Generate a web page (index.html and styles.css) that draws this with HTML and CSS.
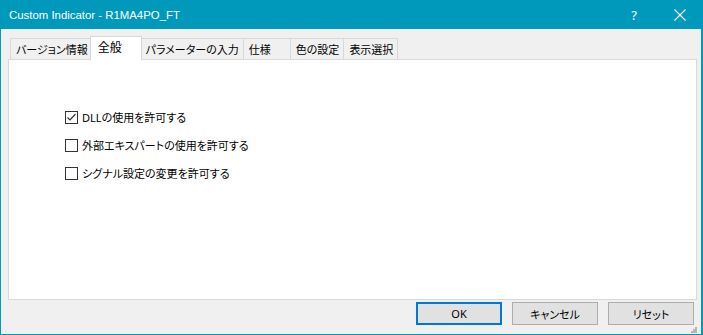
FILE: index.html
```html
<!DOCTYPE html>
<html lang="ja">
<head>
<meta charset="utf-8">
<link rel="stylesheet" href="styles.css">
</head>
<body>
<div class="window">
  <div class="titlebar">
    <span class="title">Custom Indicator - R1MA4PO_FT</span>
    <span class="tb-help">?</span>
    <span class="tb-close">
      <svg width="12" height="12" viewBox="0 0 12 12"><path d="M0.5 0.5 L11.5 11.5 M11.5 0.5 L0.5 11.5" stroke="#fff" stroke-width="1.1" fill="none"/></svg>
    </span>
  </div>
  <div class="body">
    <div class="tabs">
      <div class="tab">バージョン情報</div>
      <div class="tab active">全般</div>
      <div class="tab">パラメーターの入力</div>
      <div class="tab">仕様</div>
      <div class="tab">色の設定</div>
      <div class="tab">表示選択</div>
    </div>
    <div class="panel">
      <label class="check">
        <span class="box checked">
          <svg width="11" height="11" viewBox="0 0 11 11"><path d="M1.5 5.5 L4 8 L9.5 2" stroke="#333" stroke-width="1.2" fill="none"/></svg>
        </span>
        <span>DLLの使用を許可する</span>
      </label>
      <label class="check">
        <span class="box"></span>
        <span>外部エキスパートの使用を許可する</span>
      </label>
      <label class="check">
        <span class="box"></span>
        <span>シグナル設定の変更を許可する</span>
      </label>
    </div>
    <div class="footer">
      <button class="btn default">OK</button>
      <button class="btn">キャンセル</button>
      <button class="btn">リセット</button>
      <span class="grip">
        <svg width="6" height="6" viewBox="0 0 6 6" fill="#b5b5b5">
          <rect x="4" y="0" width="2" height="2"/>
          <rect x="2" y="2" width="2" height="2"/><rect x="4" y="2" width="2" height="2"/>
          <rect x="0" y="4" width="2" height="2"/><rect x="2" y="4" width="2" height="2"/><rect x="4" y="4" width="2" height="2"/>
        </svg>
      </span>
    </div>
  </div>
</div>
</body>
</html>
```

FILE: styles.css
```css
* { box-sizing: border-box; }
html, body { margin: 0; padding: 0; }
body {
  font-family: "Noto Sans", "Noto Sans CJK JP", sans-serif;
  font-size: 11px;
  font-feature-settings: "palt";
  color: #000;
  background: #f0f0f0;
}
.window {
  width: 703px;
  height: 335px;
  display: flex;
  flex-direction: column;
  background: #f0f0f0;
}
.titlebar {
  height: 29px;
  background: #0099bc;
  color: #fff;
  display: flex;
  align-items: center;
  padding-left: 9px;
  flex: none;
}
.title { flex: 1; font-family: "Liberation Sans", sans-serif; font-size: 11.4px; }
.tb-help { width: 46px; text-align: center; font-size: 13px; }
.tb-close { width: 46px; display: flex; justify-content: center; align-items: center; }
.body {
  flex: 1;
  display: flex;
  flex-direction: column;
  border: 1px solid #0099bc;
  border-top: 0;
  border-right-width: 2px;
  padding: 7px 4px 0 7px;
}
.tabs {
  display: flex;
  align-items: flex-end;
  height: 23px;
  padding-left: 2px;
}
.tab {
  height: 21px;
  line-height: 21px;
  min-width: 48px;
  padding: 0 4px 0 5px;
  border: 1px solid #d9d9d9;
  border-bottom: 0;
  margin-right: -1px;
  background: #f0f0f0;
  white-space: nowrap;
}
.tab.active {
  position: relative;
  z-index: 1;
  height: 24px;
  line-height: 21px;
  min-width: 52px;
  margin: 0 -2px -1px -2px;
  padding: 0 7px;
  background: #fff;
  font-size: 12px;
}
.panel {
  height: 241px;
  background: #fff;
  border: 1px solid #d9d9d9;
  padding: 49px 0 0 56px;
  display: flex;
  flex-direction: column;
  gap: 12px;
}
.check {
  display: flex;
  align-items: center;
  gap: 4px;
  height: 16px;
}
.box {
  width: 13px;
  height: 13px;
  border: 1px solid #333;
  background: #fff;
  display: flex;
  align-items: center;
  justify-content: center;
}
.footer {
  flex: 1;
  display: flex;
  justify-content: flex-end;
  align-items: flex-start;
  padding-top: 2px;
  padding-right: 3px;
  gap: 10px;
  position: relative;
}
.btn {
  width: 86px;
  height: 23px;
  background: #e1e1e1;
  border: 1px solid #adadad;
  font-family: inherit;
  font-feature-settings: "palt";
  font-size: 11px;
  color: #000;
  padding: 0;
}
.btn.default {
  border: 2px solid #0078d7;
}
.grip {
  position: absolute;
  right: 0;
  bottom: 1px;
  display: flex;
}
```
